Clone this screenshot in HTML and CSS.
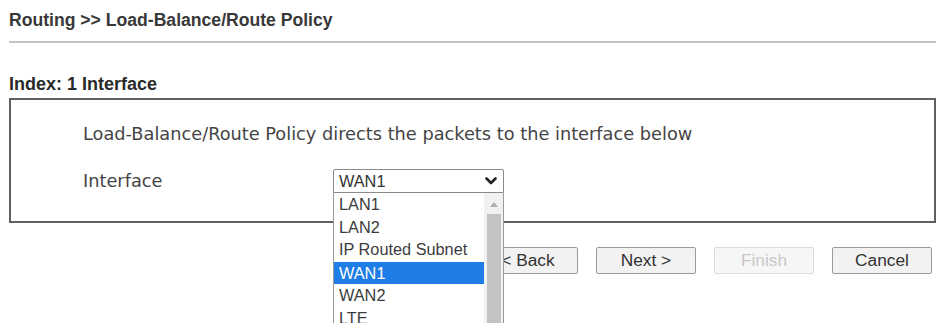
FILE: index.html
```html
<!DOCTYPE html>
<html>
<head>
<meta charset="utf-8">
<link rel="stylesheet" href="styles.css">
</head>
<body>
<div class="page">
  <div class="title">Routing &gt;&gt; Load-Balance/Route Policy</div>
  <div class="rule"></div>
  <div class="section-label">Index: 1 Interface</div>
  <div class="panel">
    <p class="intro">Load-Balance/Route Policy directs the packets to the interface below</p>
    <div class="field">
      <span class="field-label">Interface</span>
      <div class="select-wrap">
        <div class="select">
          <span>WAN1</span>
          <svg class="chev" width="12" height="8" viewBox="0 0 12 8"><polyline points="1.5,1.5 6,6 10.5,1.5" fill="none" stroke="#222" stroke-width="2.6" stroke-linecap="round" stroke-linejoin="round"/></svg>
        </div>
        <div class="listbox">
          <div class="options">
            <div class="opt">LAN1</div>
            <div class="opt">LAN2</div>
            <div class="opt">IP Routed Subnet</div>
            <div class="opt sel">WAN1</div>
            <div class="opt">WAN2</div>
            <div class="opt">LTE</div>
          </div>
          <div class="scroll">
            <svg class="up" width="8" height="5" viewBox="0 0 8 5"><polygon points="0,5 4,0 8,5" fill="#b0b0b0"/></svg>
            <div class="thumb"></div>
          </div>
        </div>
      </div>
    </div>
  </div>
  <div class="buttons">
    <button class="btn">&lt; Back</button>
    <button class="btn">Next &gt;</button>
    <button class="btn disabled">Finish</button>
    <button class="btn">Cancel</button>
  </div>
</div>
</body>
</html>
```
FILE: styles.css
```css
html, body {
  margin: 0;
  padding: 0;
  background: #fff;
  overflow: hidden;
  height: 323px;
}
.page {
  padding: 8px 7px 0 9px;
  font-family: "Liberation Sans", Arial, sans-serif;
}
.title {
  font-weight: bold;
  font-size: 17.6px;
  line-height: 24px;
  color: #383838;
}
.rule {
  margin-top: 9px;
  height: 2px;
  background: #c4c4c4;
}
.section-label {
  margin-top: 29px;
  font-weight: bold;
  font-size: 18px;
  line-height: 24px;
  color: #2a2a2a;
}
.panel {
  margin-top: 2px;
  border: 2px solid #5f5f5f;
  padding: 22px 0 28px 72px;
  font-family: "DejaVu Sans", Verdana, sans-serif;
  font-size: 17.75px;
  color: #454545;
}
.intro {
  margin: 0;
  line-height: 24px;
}
.field {
  margin-top: 23px;
  display: flex;
  align-items: center;
  height: 24px;
}
.field-label {
  width: 250px;
  line-height: 24px;
}
.select-wrap {
  position: relative;
  width: 171px;
  height: 24px;
}
.select {
  box-sizing: border-box;
  height: 24px;
  border: 1px solid #8a8a8a;
  border-radius: 2px 2px 0 0;
  display: flex;
  align-items: center;
  justify-content: space-between;
  padding: 0 6px 0 5px;
  font-family: "Liberation Sans", Arial, sans-serif;
  font-size: 16.3px;
  color: #333;
  background: #fff;
}
.chev {
  display: block;
}
.listbox {
  position: absolute;
  left: 0;
  top: 24px;
  width: 171px;
  height: 140px;
  box-sizing: border-box;
  border: 1px solid #9a9a9a;
  border-top: none;
  background: #fff;
  display: flex;
  z-index: 5;
}
.options {
  flex: 1;
  font-family: "Liberation Sans", Arial, sans-serif;
  font-size: 16.3px;
  color: #3c3c3c;
}
.opt {
  height: 22.6px;
  line-height: 22.6px;
  padding-left: 5px;
  white-space: nowrap;
}
.opt.sel {
  background: #1e7de6;
  color: #fff;
  margin-top: 1px;
}
.scroll {
  width: 19px;
  background: #f1f1f1;
  position: relative;
}
.up {
  position: absolute;
  left: 6px;
  top: 9px;
}
.thumb {
  position: absolute;
  left: 3px;
  right: 2px;
  top: 21px;
  bottom: 0;
  background: #c3c3c3;
}
.buttons {
  margin-top: 24px;
  display: flex;
  justify-content: flex-end;
  gap: 18px;
  padding-right: 4px;
}
.btn {
  box-sizing: border-box;
  width: 100px;
  height: 27px;
  border: 1px solid #9a9a9a;
  border-radius: 2px;
  background: #f2f2f2;
  font-family: "Liberation Sans", Arial, sans-serif;
  font-size: 17.3px;
  color: #333;
  padding: 0;
}
.btn.disabled {
  border-color: #dcdcdc;
  background: #f6f6f6;
  color: #c8c8c8;
}
```
